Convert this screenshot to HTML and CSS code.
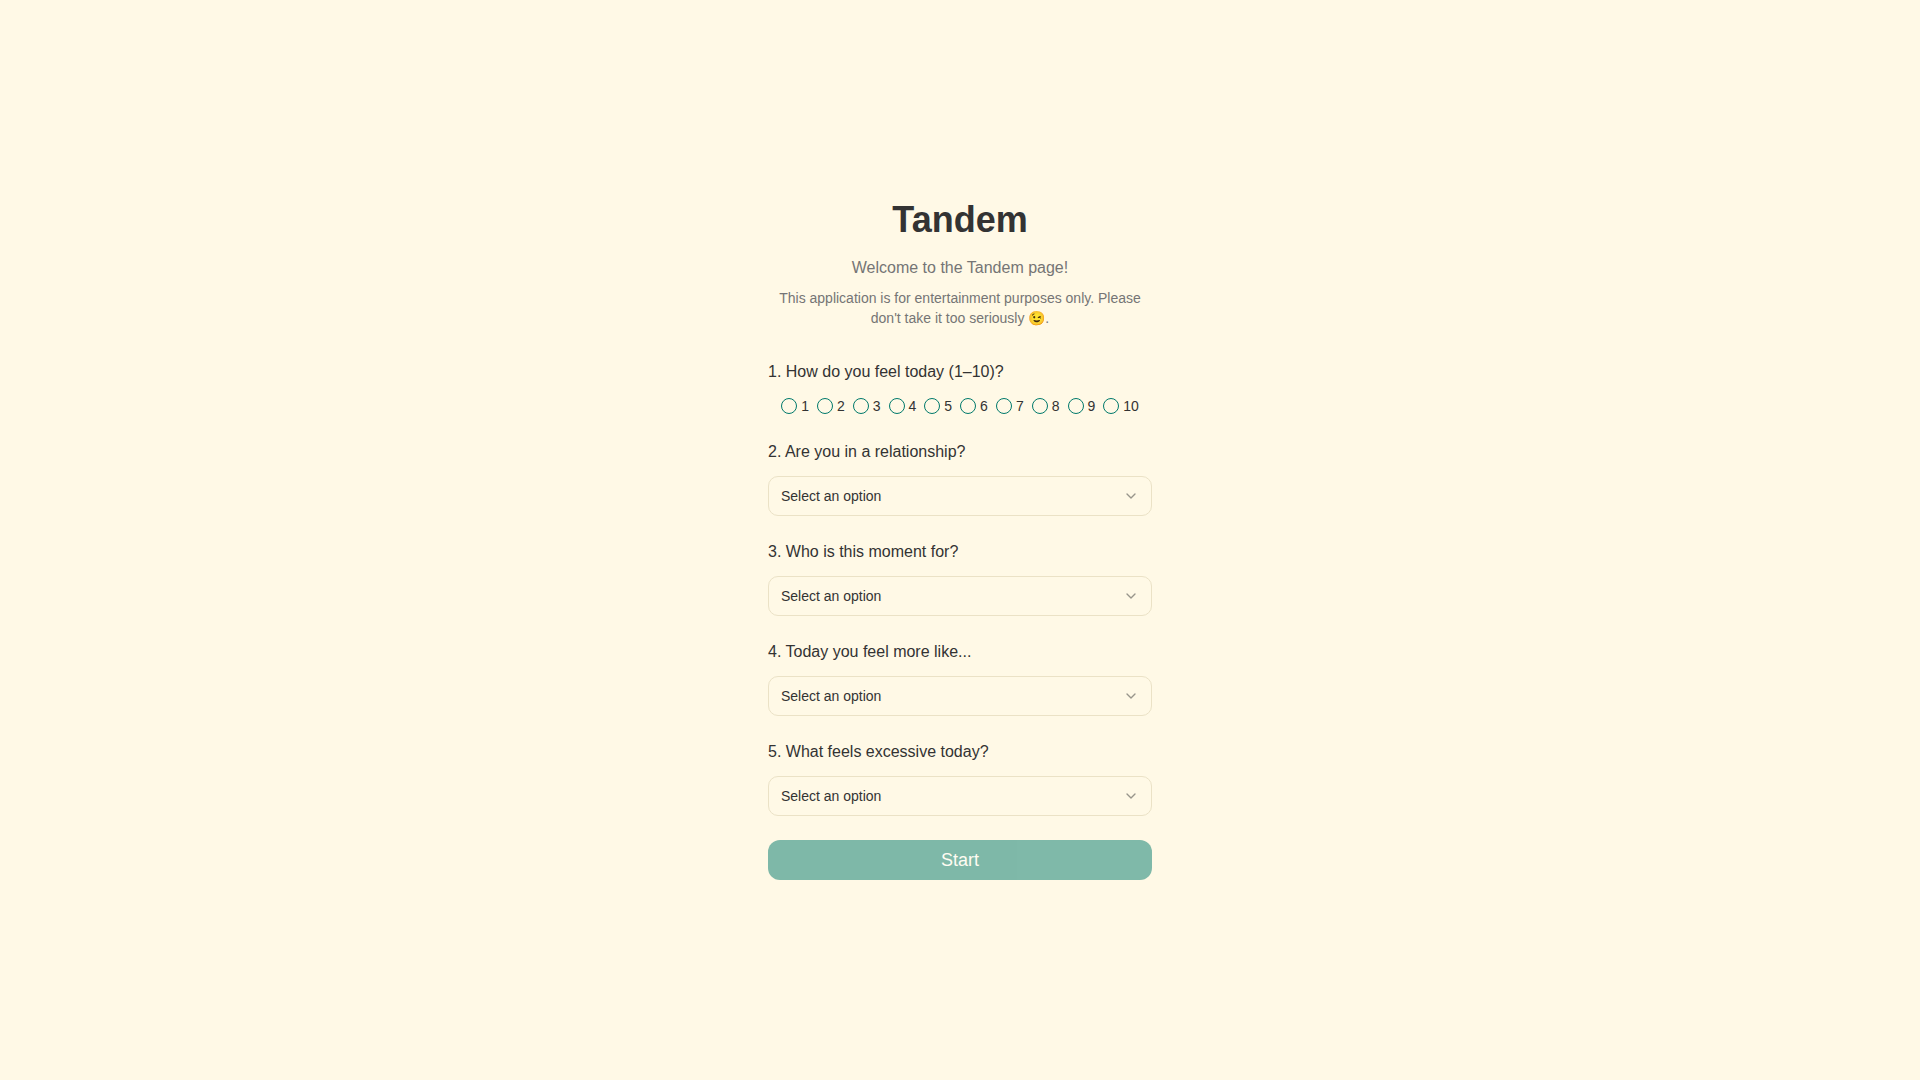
FILE: index.html
```html
<!DOCTYPE html>
<html lang="en">
<head>
  <meta charset="UTF-8" />
  <meta name="viewport" content="width=device-width, initial-scale=1.0" />
  <title>Tandem</title>
  <link rel="stylesheet" href="styles.css">
</head>
<body>
  <main class="page">
    <header class="intro">
      <h1>Tandem</h1>
      <p class="welcome">Welcome to the Tandem page!</p>
      <p class="disclaimer">This application is for entertainment purposes only. Please don't take it too seriously 😉.</p>
    </header>
    <form class="quiz" id="quizForm">
      <fieldset class="question">
        <legend>1. How do you feel today (1–10)?</legend>
        <div class="scale">
          <label><input type="radio" name="feeling" value="1">1</label>
          <label><input type="radio" name="feeling" value="2">2</label>
          <label><input type="radio" name="feeling" value="3">3</label>
          <label><input type="radio" name="feeling" value="4">4</label>
          <label><input type="radio" name="feeling" value="5">5</label>
          <label><input type="radio" name="feeling" value="6">6</label>
          <label><input type="radio" name="feeling" value="7">7</label>
          <label><input type="radio" name="feeling" value="8">8</label>
          <label><input type="radio" name="feeling" value="9">9</label>
          <label><input type="radio" name="feeling" value="10">10</label>
        </div>
      </fieldset>
      <div class="question">
        <label for="relationship">2. Are you in a relationship?</label>
        <div class="select-box">
          <select id="relationship" name="relationship">
            <option value="">Select an option</option>
          </select>
          <svg class="chevron" viewBox="0 0 24 24" aria-hidden="true"><path d="m6 9 6 6 6-6"/></svg>
        </div>
      </div>
      <div class="question">
        <label for="moment">3. Who is this moment for?</label>
        <div class="select-box">
          <select id="moment" name="moment">
            <option value="">Select an option</option>
          </select>
          <svg class="chevron" viewBox="0 0 24 24" aria-hidden="true"><path d="m6 9 6 6 6-6"/></svg>
        </div>
      </div>
      <div class="question">
        <label for="mood">4. Today you feel more like...</label>
        <div class="select-box">
          <select id="mood" name="mood">
            <option value="">Select an option</option>
          </select>
          <svg class="chevron" viewBox="0 0 24 24" aria-hidden="true"><path d="m6 9 6 6 6-6"/></svg>
        </div>
      </div>
      <div class="question">
        <label for="excessive">5. What feels excessive today?</label>
        <div class="select-box">
          <select id="excessive" name="excessive">
            <option value="">Select an option</option>
          </select>
          <svg class="chevron" viewBox="0 0 24 24" aria-hidden="true"><path d="m6 9 6 6 6-6"/></svg>
        </div>
      </div>
      <button type="submit" class="btn-start" disabled>Start</button>
    </form>
  </main>
</body>
</html>
```
FILE: styles.css
```css
:root {
  --cream: #fff9e6;
  --border: #ebe2c6;
  --green: #00796b;
  --text: #333333;
  --muted: #757575;
}
* { box-sizing: border-box; }
body {
  margin: 0;
  font-family: "Liberation Sans", Arial, sans-serif;
  font-size: 16px;
  line-height: 24px;
  color: var(--text);
  background: var(--cream);
}
.page {
  min-height: 100vh;
  display: flex;
  flex-direction: column;
  align-items: center;
  justify-content: center;
  gap: 32px;
  padding: 16px;
}
.intro, .quiz {
  width: 100%;
  max-width: 384px;
}
.intro {
  text-align: center;
  color: var(--muted);
}
.intro h1 {
  margin: 0 0 16px;
  font-size: 36px;
  line-height: 40px;
  font-weight: bold;
  color: var(--text);
}
.intro p { margin: 0; }
.intro .disclaimer {
  margin-top: 8px;
  font-size: 14px;
  line-height: 20px;
}
.quiz {
  display: flex;
  flex-direction: column;
  gap: 24px;
}
.question {
  display: flex;
  flex-direction: column;
  gap: 12px;
  min-width: 0;
  margin: 0;
  padding: 0;
  border: none;
}
.question legend {
  padding: 0;
  margin-bottom: 12px;
}
.scale {
  display: flex;
  flex-wrap: wrap;
  justify-content: center;
  gap: 8px;
}
.scale label {
  display: flex;
  align-items: center;
  gap: 4px;
  font-size: 14px;
  line-height: 20px;
}
.scale input {
  appearance: none;
  width: 16px;
  height: 16px;
  margin: 0;
  border: 1px solid var(--green);
  border-radius: 50%;
}
.scale input:checked {
  background: radial-gradient(var(--green) 4px, transparent 5px);
}
.select-box { position: relative; }
.select-box select {
  appearance: none;
  display: block;
  width: 100%;
  height: 40px;
  padding: 0 36px 0 12px;
  font-family: inherit;
  font-size: 14px;
  color: var(--text);
  background: var(--cream);
  border: 1px solid var(--border);
  border-radius: 10px;
}
/* arrow sits over the select */
.chevron {
  position: absolute;
  top: 12px;
  right: 13px;
  width: 16px;
  height: 16px;
  fill: none;
  stroke: var(--text);
  stroke-width: 2;
  stroke-linecap: round;
  stroke-linejoin: round;
  opacity: 0.5;
  pointer-events: none;
}
.btn-start {
  height: 40px;
  padding: 0 16px;
  font-family: inherit;
  font-size: 18px;
  color: white;
  background: var(--green);
  border: none;
  border-radius: 12px;
  cursor: pointer;
}
.btn-start:disabled {
  opacity: 0.5;
  cursor: default;
}
```
